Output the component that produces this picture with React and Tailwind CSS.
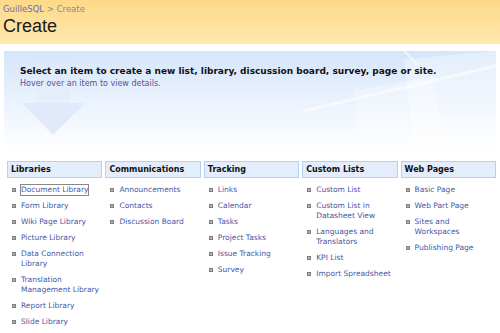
import React from "react";

const cols = [
  { title: "Libraries", items: [["Document Library"], ["Form Library"], ["Wiki Page Library"], ["Picture Library"], ["Data Connection", "Library"], ["Translation", "Management Library"], ["Report Library"], ["Slide Library"]] },
  { title: "Communications", items: [["Announcements"], ["Contacts"], ["Discussion Board"]] },
  { title: "Tracking", items: [["Links"], ["Calendar"], ["Tasks"], ["Project Tasks"], ["Issue Tracking"], ["Survey"]] },
  { title: "Custom Lists", items: [["Custom List"], ["Custom List in", "Datasheet View"], ["Languages and", "Translators"], ["KPI List"], ["Import Spreadsheet"]] },
  { title: "Web Pages", items: [["Basic Page"], ["Web Part Page"], ["Sites and", "Workspaces"], ["Publishing Page"]] },
];

export default function App() {
  return (
    <div className="w-[500px] h-[333px] overflow-hidden bg-white" style={{ fontFamily: "'DejaVu Sans', Verdana, sans-serif" }}>
      <div className="h-[44px] bg-gradient-to-b from-[#fdd888] to-[#ffe9ae] pl-[3px] pt-[3px]">
        <div className="text-[8.5px] leading-[12px] text-[#8a8a9a]">
          <span className="text-[#6a6ea8]">GuilleSQL</span> &gt; Create
        </div>
        <div className="text-[18px] leading-[22px] text-[#1a1a1a]" style={{ fontFamily: "'Liberation Sans', Tahoma, sans-serif" }}>Create</div>
      </div>
      <div className="relative mx-[4px] mt-[7px] h-[99px] bg-gradient-to-b from-[#d5e5fb] via-[#eaf2fd] to-white overflow-hidden">
        <svg className="absolute inset-0" width="492" height="99" viewBox="0 0 492 99">
          <polygon points="33,10 66,10 66,52 33,52" fill="#e2ecfa" opacity="0.5" />
          <polygon points="18,52 81,52 49,84" fill="#dde8f9" opacity="0.85" />
          <polygon points="400,8 492,0 492,99 410,99" fill="#ffffff" opacity="0.35" />
          <polygon points="350,40 430,25 440,99 355,99" fill="#ffffff" opacity="0.3" />
          <line x1="300" y1="60" x2="492" y2="15" stroke="#ffffff" strokeWidth="3" opacity="0.6" />
          <line x1="400" y1="0" x2="420" y2="20" stroke="#ffffff" strokeWidth="2" opacity="0.6" />
        </svg>
        <div className="relative pl-[16px] pt-[14px]">
          <div className="text-[9px] leading-[12px] font-bold text-[#111]">Select an item to create a new list, library, discussion board, survey, page or site.</div>
          <div className="text-[8px] leading-[11px] text-[#555598] mt-[1px]">Hover over an item to view details.</div>
        </div>
      </div>
      <div className="grid grid-cols-5 gap-[3px] ml-[7px] w-[489px] mt-[11px]">
        {cols.map((c) => (
          <div key={c.title}>
            <div className="h-[17px] bg-[#e3edfc] border border-[#b7d0f2] pl-[3px] text-[8px] leading-[15px] font-bold text-[#111]">{c.title}</div>
            <div className="pt-[7px] flex flex-col gap-[6px]">
              {c.items.map((it, i) => (
                <div key={i} className="flex items-start pl-[5px]">
                  <div className="w-[4px] h-[4px] mt-[3px] bg-[#b0b0b0] border border-[#808080] shrink-0" />
                  <div className={"ml-[5px] text-[7.5px] leading-[10px] text-[#4557a8] " + (c.title === "Libraries" && i === 0 ? "outline outline-1 outline-[#888]" : "")}>
                    {it.map((l, j) => (<div key={j}>{l}</div>))}
                  </div>
                </div>
              ))}
            </div>
          </div>
        ))}
      </div>
    </div>
  );
}
